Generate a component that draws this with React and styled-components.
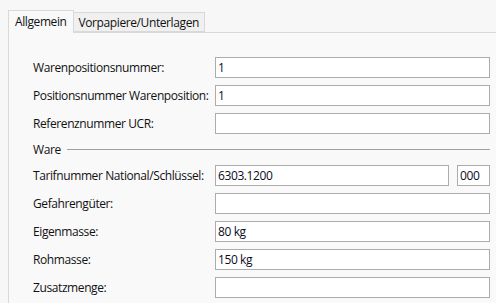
import React from "react";
import styled, { createGlobalStyle } from "styled-components";

const Global = createGlobalStyle`
  html, body { margin: 0; padding: 0; background: #f7f7f7; }
  body { font-family: "Open Sans", "Noto Sans", sans-serif; font-size: 12px; letter-spacing: -0.4px; color: #111; }
  #root { width: 496px; height: 303px; overflow: hidden; }
`;

const Page = styled.div`
  padding: 10px 0 0 8px;
  height: 303px;
  box-sizing: border-box;
  display: flex;
  flex-direction: column;
`;

const TabBar = styled.div`
  display: flex;
  align-items: flex-end;
  height: 22px;
  position: relative;
  z-index: 1;
`;

const Tab = styled.div`
  box-sizing: border-box;
  height: ${(p) => (p.$active ? "23px" : "20px")};
  padding: ${(p) => (p.$active ? "2px 6px 0 6px" : "1px 5px 0 5px")};
  margin-bottom: ${(p) => (p.$active ? "-1px" : "0")};
  background: ${(p) => (p.$active ? "#f9f9f9" : "#f0f0f0")};
  border: 1px solid #d9d9d9;
  border-bottom: ${(p) => (p.$active ? "none" : "1px solid #d9d9d9")};
  border-left: ${(p) => (p.$first ? "1px solid #d9d9d9" : "none")};
  line-height: 17px;
  white-space: nowrap;
  color: #111;
`;

const Pane = styled.div`
  flex: 1;
  background: #f9f9f9;
  border-left: 1px solid #d9d9d9;
  border-top: 1px solid #d9d9d9;
  padding: 24px 6px 0 24px;
`;

const Form = styled.div`
  display: grid;
  grid-template-columns: 182px 1fr;
  row-gap: 7px;
  align-items: center;
`;

const Label = styled.div`
  white-space: nowrap;
  line-height: 21px;
`;

const Field = styled.div`
  box-sizing: border-box;
  height: 21px;
  border: 1px solid #acacac;
  background: #fff;
  padding: 0 2px;
  line-height: 19px;
  color: #0b0b1e;
  white-space: nowrap;
  overflow: hidden;
`;

const SplitCell = styled.div`
  display: flex;
  gap: 8px;
`;

const Grow = styled(Field)`
  flex: 1;
`;

const Small = styled(Field)`
  width: 33px;
  flex: none;
`;

const Separator = styled.div`
  grid-column: 1 / -1;
  display: flex;
  align-items: center;
  height: 17px;
  gap: 6px;
  &::after {
    content: "";
    flex: 1;
    height: 1px;
    background: #a0a0a0;
  }
`;

const rowsA = [
  ["Warenpositionsnummer:", "1"],
  ["Positionsnummer Warenposition:", "1"],
  ["Referenznummer UCR:", ""],
];

const rowsB = [
  ["Gefahrengüter:", ""],
  ["Eigenmasse:", "80 kg"],
  ["Rohmasse:", "150 kg"],
  ["Zusatzmenge:", ""],
];

export default function App() {
  return (
    <>
      <Global />
      <Page>
        <TabBar>
          <Tab $active $first>Allgemein</Tab>
          <Tab>Vorpapiere/Unterlagen</Tab>
        </TabBar>
        <Pane>
          <Form>
            {rowsA.map(([l, v]) => (
              <React.Fragment key={l}>
                <Label>{l}</Label>
                <Field>{v}</Field>
              </React.Fragment>
            ))}
            <Separator>Ware</Separator>
            <Label>Tarifnummer National/Schlüssel:</Label>
            <SplitCell>
              <Grow>6303.1200</Grow>
              <Small>000</Small>
            </SplitCell>
            {rowsB.map(([l, v]) => (
              <React.Fragment key={l}>
                <Label>{l}</Label>
                <Field>{v}</Field>
              </React.Fragment>
            ))}
          </Form>
        </Pane>
      </Page>
    </>
  );
}
